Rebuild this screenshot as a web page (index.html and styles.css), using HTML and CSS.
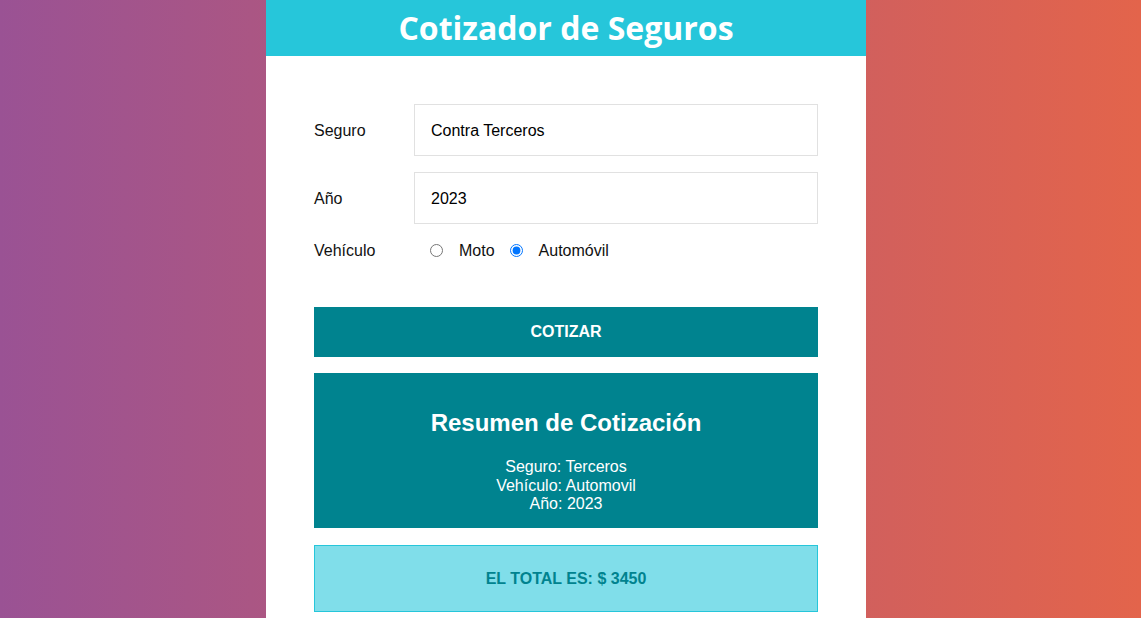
FILE: index.html
```html
<!DOCTYPE html>
<html lang="es">
<head>
<meta charset="utf-8">
<title>Cotizador de Seguros</title>
<link rel="stylesheet" href="styles.css">
</head>
<body>
<div class="page">
  <div class="card">
    <header class="header"><h1>Cotizador de Seguros</h1></header>
    <form class="form">
      <div class="row">
        <label class="label">Seguro</label>
        <div class="field">Contra Terceros</div>
      </div>
      <div class="row">
        <label class="label">Año</label>
        <div class="field">2023</div>
      </div>
      <div class="row radios">
        <label class="label">Vehículo</label>
        <div class="options">
          <input type="radio" name="v" class="radio"><span class="opt">Moto</span>
          <input type="radio" name="v" class="radio" checked><span class="opt">Automóvil</span>
        </div>
      </div>
      <button type="button" class="btn">COTIZAR</button>
      <div class="summary">
        <h2>Resumen de Cotización</h2>
        <ul>
          <li>Seguro: Terceros</li>
          <li>Vehículo: Automovil</li>
          <li>Año: 2023</li>
        </ul>
      </div>
      <div class="total">EL TOTAL ES: $ 3450</div>
    </form>
  </div>
</div>
</body>
</html>
```
FILE: styles.css
```css
* { box-sizing: border-box; }
html, body { margin: 0; padding: 0; height: 100%; }
body {
  font-family: "Liberation Sans", Arial, sans-serif;
  background: linear-gradient(to right, #9a5294, #e3644b);
  overflow: hidden;
}
.page { display: flex; justify-content: center; min-height: 100%; padding-right: 9px; }
.card { width: 600px; background: #fff; min-height: 618px; }
.header {
  background: #26c6da;
  height: 56px;
  display: flex;
  align-items: center;
  justify-content: center;
}
.header h1 {
  margin: 0;
  color: #fff;
  font-family: "Open Sans", Lato, sans-serif;
  font-weight: 700;
  font-size: 32px;
  line-height: 56px;
}
.form { padding: 48px 48px 0; display: flex; flex-direction: column; }
.row { display: flex; align-items: center; margin-bottom: 16px; }
.label { width: 100px; flex: none; font-size: 16px; color: #111; padding-top: 2px; }
.field {
  flex: 1;
  height: 52px;
  border: 1px solid #e1e1e1;
  padding: 2px 16px 0;
  display: flex;
  align-items: center;
  font-size: 16px;
  color: #000;
}
.radios { margin-bottom: 0; height: 20px; margin-top: 0; }
.options { display: flex; align-items: center; padding-left: 16px; }
.radio { margin: 0 3px 0 0; width: 13px; height: 13px; }
.opt { font-size: 16px; color: #111; margin: 0 15px 0 13px; padding-top: 2px; }
.btn {
  margin-top: 47px;
  height: 50px;
  border: 0;
  background: #00838f;
  color: #fff;
  font-family: "Liberation Sans", Arial, sans-serif;
  font-size: 16px;
  font-weight: 700;
}
.summary {
  margin-top: 16px;
  background: #00838f;
  color: #fff;
  text-align: center;
  height: 155px;
  padding-top: 36px;
}
.summary h2 { margin: 0 0 21px; font-size: 24px; font-weight: 700; letter-spacing: 0; }
.summary ul { list-style: none; margin: 0; padding: 0; font-size: 16px; line-height: 18.5px; }
.total {
  margin-top: 17px;
  height: 67px;
  background: #80deea;
  border: 1px solid #26c6da;
  color: #00838f;
  font-weight: 700;
  font-size: 16px;
  display: flex;
  align-items: center;
  justify-content: center;
}
```
